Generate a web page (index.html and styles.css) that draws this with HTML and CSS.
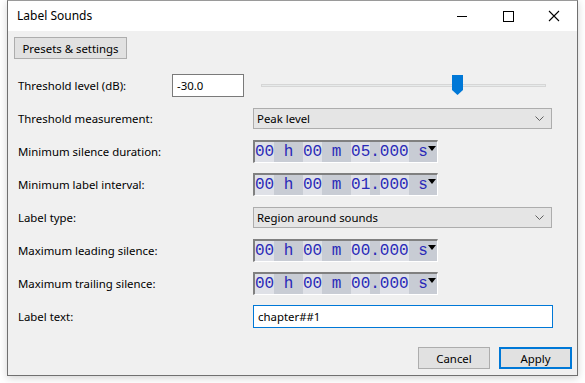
FILE: index.html
```html
<!DOCTYPE html>
<html>
<head>
<meta charset="utf-8">
<link rel="stylesheet" href="styles.css">
</head>
<body>
<div class="window">
  <div class="titlebar">
    <span class="title">Label Sounds</span>
    <div class="caps">
      <span class="cap"><svg width="12" height="12" viewBox="0 0 12 12"><path d="M1 6.5H11" stroke="#000" stroke-width="1"/></svg></span>
      <span class="cap"><svg width="12" height="12" viewBox="0 0 12 12"><rect x="1.5" y="1.5" width="10" height="10" fill="none" stroke="#000" stroke-width="1"/></svg></span>
      <span class="cap"><svg width="12" height="12" viewBox="0 0 12 12"><path d="M1 1L11 11M11 1L1 11" stroke="#000" stroke-width="1.1"/></svg></span>
    </div>
  </div>
  <div class="body">
    <div class="btn presets">Presets &amp; settings</div>
    <div class="form">
      <div class="row thresh">
        <span class="lbl short">Threshold level (dB):</span>
        <div class="textbox small">-30.0</div>
        <div class="slider">
          <div class="track"></div>
          <svg class="thumb" width="11" height="20" viewBox="0 0 11 20"><path d="M0 0H11V15L5.5 20L0 15Z" fill="#0078d7"/></svg>
        </div>
      </div>
      <div class="row">
        <span class="lbl">Threshold measurement:</span>
        <div class="combo"><span>Peak level</span><svg width="9" height="6" viewBox="0 0 9 6"><path d="M0.5 0.5L4.5 4.5L8.5 0.5" fill="none" stroke="#606060" stroke-width="1"/></svg></div>
      </div>
      <div class="row">
        <span class="lbl">Minimum silence duration:</span>
        <div class="time"><span class="f">00</span><span class="s"> h </span><span class="f">00</span><span class="s"> m </span><span class="f">05</span><span class="s">.</span><span class="f">000</span><span class="s"> s</span><svg class="arr" width="8" height="5" viewBox="0 0 8 5"><path d="M0 0H8L4 5Z" fill="#000"/></svg></div>
      </div>
      <div class="row">
        <span class="lbl">Minimum label interval:</span>
        <div class="time"><span class="f">00</span><span class="s"> h </span><span class="f">00</span><span class="s"> m </span><span class="f">01</span><span class="s">.</span><span class="f">000</span><span class="s"> s</span><svg class="arr" width="8" height="5" viewBox="0 0 8 5"><path d="M0 0H8L4 5Z" fill="#000"/></svg></div>
      </div>
      <div class="row">
        <span class="lbl">Label type:</span>
        <div class="combo"><span>Region around sounds</span><svg width="9" height="6" viewBox="0 0 9 6"><path d="M0.5 0.5L4.5 4.5L8.5 0.5" fill="none" stroke="#606060" stroke-width="1"/></svg></div>
      </div>
      <div class="row">
        <span class="lbl">Maximum leading silence:</span>
        <div class="time"><span class="f">00</span><span class="s"> h </span><span class="f">00</span><span class="s"> m </span><span class="f">00</span><span class="s">.</span><span class="f">000</span><span class="s"> s</span><svg class="arr" width="8" height="5" viewBox="0 0 8 5"><path d="M0 0H8L4 5Z" fill="#000"/></svg></div>
      </div>
      <div class="row">
        <span class="lbl">Maximum trailing silence:</span>
        <div class="time"><span class="f">00</span><span class="s"> h </span><span class="f">00</span><span class="s"> m </span><span class="f">00</span><span class="s">.</span><span class="f">000</span><span class="s"> s</span><svg class="arr" width="8" height="5" viewBox="0 0 8 5"><path d="M0 0H8L4 5Z" fill="#000"/></svg></div>
      </div>
      <div class="row">
        <span class="lbl">Label text:</span>
        <div class="textbox wide">chapter##1</div>
      </div>
    </div>
    <div class="footer">
      <div class="btn cancel">Cancel</div>
      <div class="btn apply">Apply</div>
    </div>
  </div>
</div>
</body>
</html>
```

FILE: styles.css
```css
* { box-sizing: border-box; }
html, body { margin: 0; padding: 0; background: #ffffff; }
body {
  width: 585px;
  height: 383px;
  overflow: hidden;
  font-family: "Noto Sans", "Open Sans", sans-serif;
  font-size: 11.4px;
  color: #000;
}
.window {
  margin-left: 7px;
  width: 571px;
  height: 376px;
  border: 1px solid #707070;
  border-top-color: #9a9a9a;
  background: #f0f0f0;
  box-shadow: 0 2px 8px rgba(0,0,0,0.18);
  display: flex;
  flex-direction: column;
}
.titlebar {
  height: 30px;
  background: #ffffff;
  display: flex;
  align-items: center;
  justify-content: space-between;
  flex-shrink: 0;
}
.title { padding-left: 9px; padding-bottom: 1px; font-size: 12px; }
.caps { display: flex; height: 30px; }
.cap {
  width: 46px;
  display: flex;
  align-items: center;
  justify-content: center;
  padding-bottom: 1px;
}
.body {
  flex: 1;
  padding: 6px 5px 6px 6px;
  display: flex;
  flex-direction: column;
}
.btn {
  background: #e1e1e1;
  border: 1px solid #adadad;
  height: 22px;
  display: flex;
  align-items: center;
  justify-content: center;
}
.presets { width: 113px; }
.form {
  margin-top: 10px;
  margin-left: 4px;
  display: flex;
  flex-direction: column;
}
.row {
  height: 33px;
  display: flex;
  align-items: center;
}
.lbl { width: 235px; flex-shrink: 0; }
.lbl.short { width: 154px; }
.textbox {
  background: #fff;
  border: 1px solid #7a7a7a;
  height: 23px;
  display: flex;
  align-items: center;
  padding-left: 4px;
}
.textbox.small { width: 72px; }
.textbox.wide { width: 300px; border-color: #0078d7; }
.slider {
  position: relative;
  margin-left: 17px;
  width: 285px;
  height: 23px;
  display: flex;
  align-items: center;
}
.track {
  width: 100%;
  height: 3px;
  background: #e7eaea;
  border: 1px solid #d6d6d6;
}
.thumb { position: absolute; left: 191px; top: 1px; }
.combo {
  width: 299px;
  height: 21px;
  background: #e5e5e5;
  border: 1px solid #adadad;
  display: flex;
  align-items: center;
  justify-content: space-between;
  padding: 0 7px 0 3px;
}
.time {
  position: relative;
  width: 185px;
  height: 23px;
  background: #c8ccd4;
  border-top: 2px solid #808080;
  border-left: 2px solid #808080;
  border-right: 1px solid #ffffff;
  border-bottom: 1px solid #ffffff;
  display: flex;
  align-items: center;
  font-family: "Liberation Mono", monospace;
  font-size: 16px;
  color: #2a2ab8;
  white-space: pre;
  line-height: 20px;
}
.time .f { background: #dfe1e7; }
.time .arr { position: absolute; right: 1px; top: 4px; }
.footer {
  margin-top: auto;
  display: flex;
  justify-content: flex-end;
  gap: 9px;
}
.cancel { width: 72px; }
.apply { width: 73px; border: 2px solid #0078d7; }
```
